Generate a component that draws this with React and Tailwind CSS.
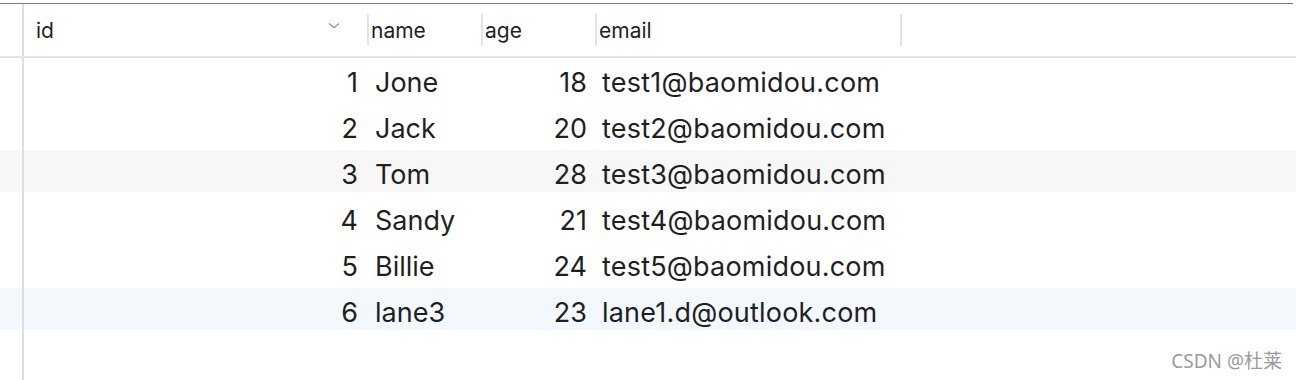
// App.jsx
const rows = [
  { id: 1, name: "Jone", age: 18, email: "test1@baomidou.com", bg: "bg-white" },
  { id: 2, name: "Jack", age: 20, email: "test2@baomidou.com", bg: "bg-white" },
  { id: 3, name: "Tom", age: 28, email: "test3@baomidou.com", bg: "bg-[#f7f7f7]" },
  { id: 4, name: "Sandy", age: 21, email: "test4@baomidou.com", bg: "bg-white" },
  { id: 5, name: "Billie", age: 24, email: "test5@baomidou.com", bg: "bg-white" },
  { id: 6, name: "lane3", age: 23, email: "lane1.d@outlook.com", bg: "bg-[#f3f8fd]" },
];

const cols = "grid grid-cols-[24px_343px_114px_114px_305px_1fr]";

function Sep() {
  return <span className="w-[2px] h-[32px] bg-[#e4e4e4] shrink-0" />;
}

function Gutter() {
  return <div className="h-full border-r-2 border-[#dedede]" />;
}

export default function App() {
  return (
    <div className="w-[1296px] h-[380px] bg-white flex flex-col font-['Inter',sans-serif] text-[#1f1f1f] overflow-hidden">
      {/* top rule */}
      <div className="mt-[3px] w-[1293px] border-t border-[#7c7c7c]" />

      {/* header */}
      <div className={`${cols} h-[54px] border-b-2 border-[#e4e4e4] text-[21px]`}>
        <Gutter />
        <div className="flex items-center justify-between pl-[12px] pr-[27px]">
          <span className="pt-[2px]">id</span>
          <svg width="12" height="7" viewBox="0 0 12 7" fill="none" className="-mt-[10px]">
            <path d="M1 1.5l5 4 5-4" stroke="#9a9a9a" strokeWidth="1.4" />
          </svg>
        </div>
        <div className="flex items-center">
          <Sep />
          <span className="ml-[2px] pt-[2px]">name</span>
        </div>
        <div className="flex items-center">
          <Sep />
          <span className="ml-[2px] pt-[2px]">age</span>
        </div>
        <div className="flex items-center">
          <Sep />
          <span className="ml-[2px] pt-[2px]">email</span>
        </div>
        <div className="flex items-center">
          <Sep />
        </div>
      </div>

      {/* body */}
      {rows.map((r) => (
        <div key={r.id} className="flex flex-col">
          <div className={`${cols} h-[42px] text-[27px] ${r.bg}`}>
            <Gutter />
            <div className="flex items-center justify-end pr-[9px] pt-[5px]">{r.id}</div>
            <div className="flex items-center pl-[8px] pt-[5px]">{r.name}</div>
            <div className="flex items-center justify-end pr-[8px] pt-[5px]">{r.age}</div>
            <div className="flex items-center pl-[7px] pt-[5px] whitespace-nowrap tracking-[0.2px]">{r.email}</div>
            <div />
          </div>
          <div className="h-[4px] w-[24px] border-r-2 border-[#dedede]" />
        </div>
      ))}

      <div className="flex-1 flex">
        <div className="w-[24px] border-r-2 border-[#dedede]" />
        <div className="flex-1 flex items-center justify-end pr-[14px] pt-[8px]">
          <span className="text-[19px] text-[#9b9b9b] font-['Noto_Sans','Noto_Sans_CJK_SC',sans-serif]">
            CSDN @杜莱
          </span>
        </div>
      </div>
    </div>
  );
}
